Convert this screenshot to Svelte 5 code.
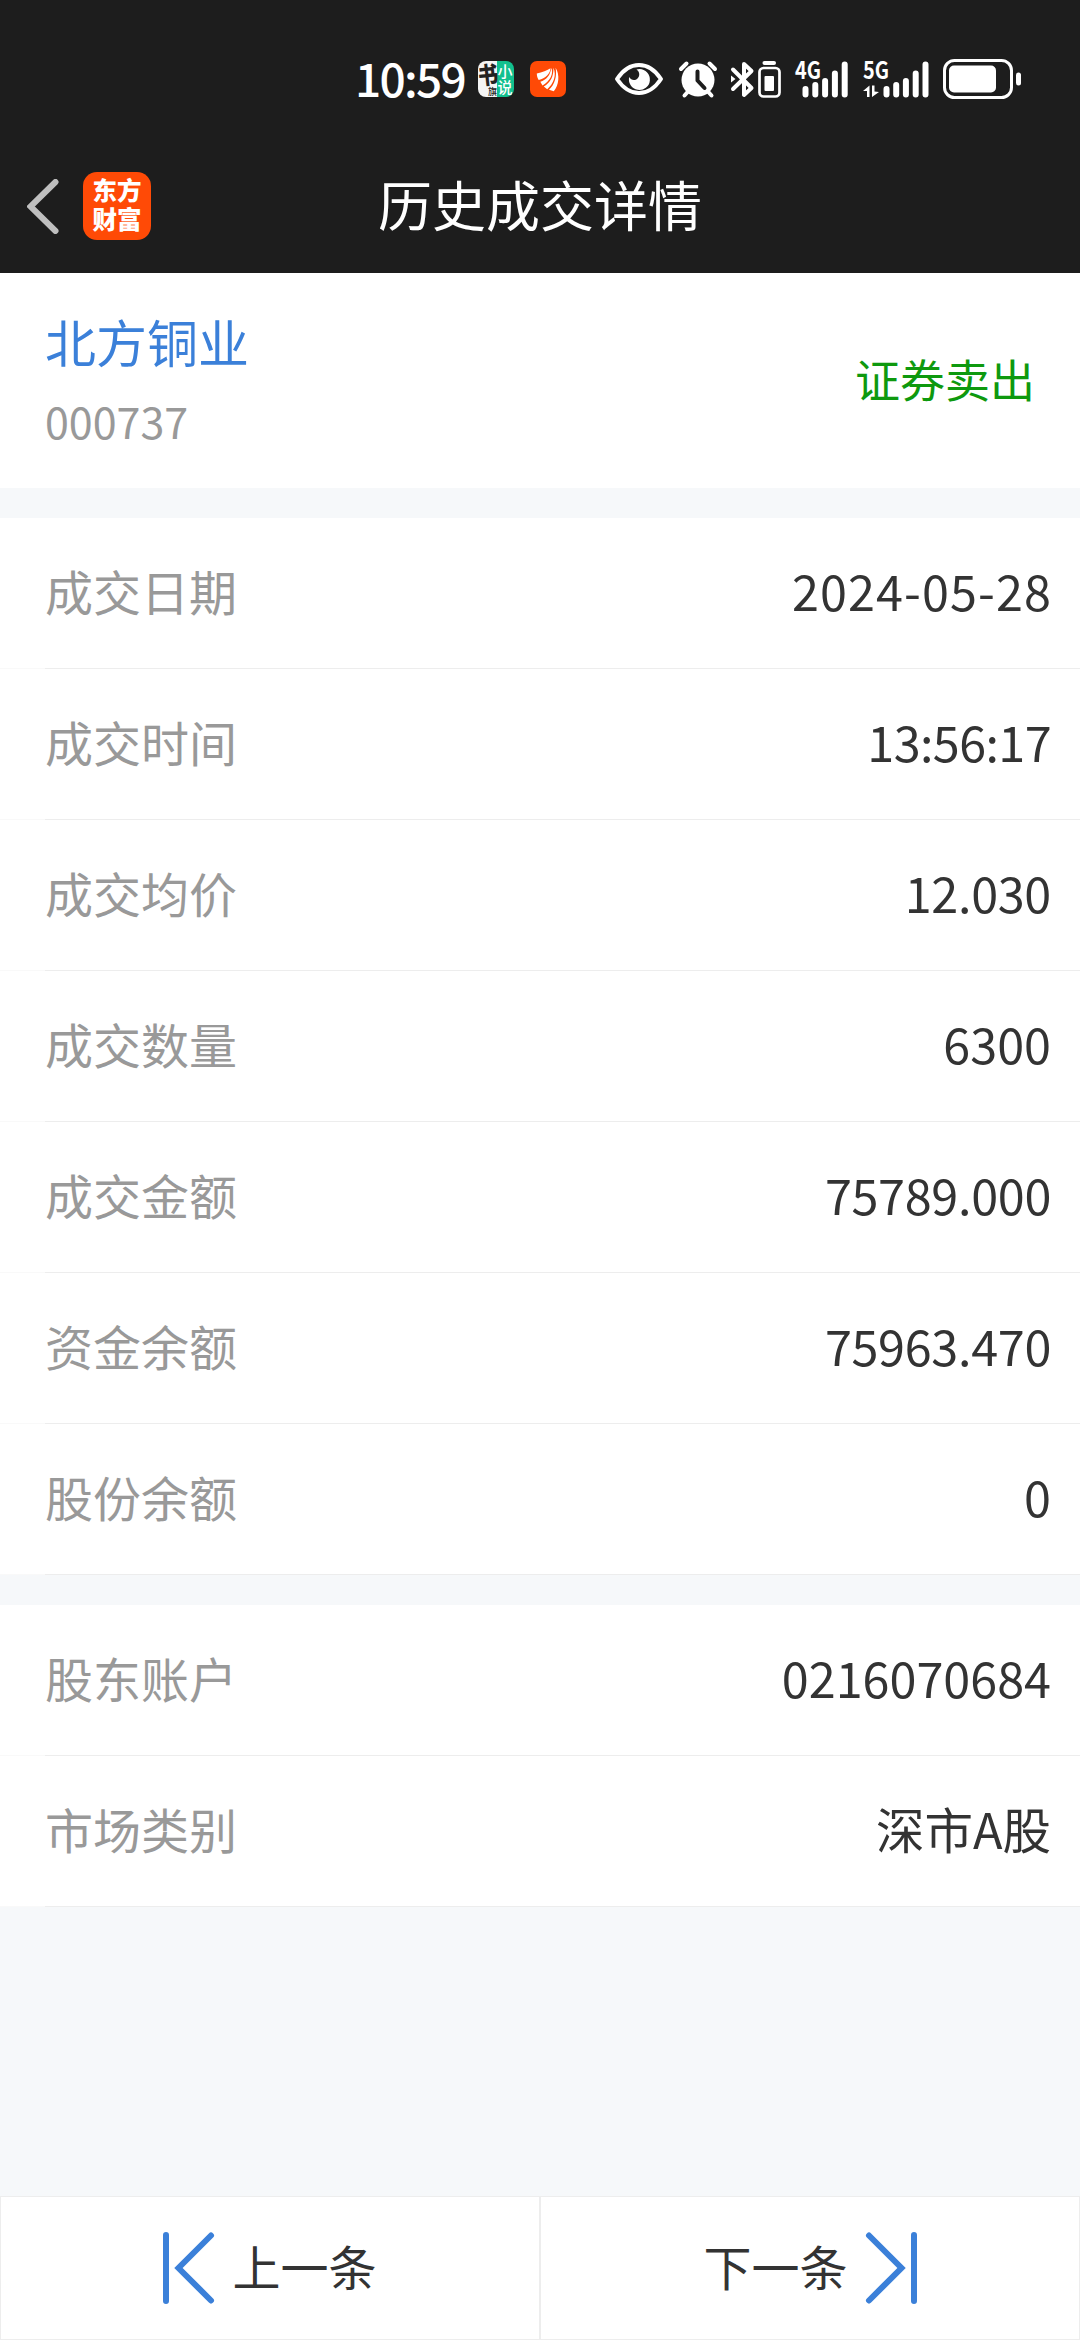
<script lang="ts">
  type Row = { label: string; value: string; kind?: 'date' | 'time' | 'decimal' };

  const stock = { name: '北方铜业', code: '000737', action: '证券卖出' };

  const groups: Row[][] = [
    [
      { label: '成交日期', value: '2024-05-28', kind: 'date' },
      { label: '成交时间', value: '13:56:17', kind: 'time' },
      { label: '成交均价', value: '12.030', kind: 'decimal' },
      { label: '成交数量', value: '6300' },
      { label: '成交金额', value: '75789.000', kind: 'decimal' },
      { label: '资金余额', value: '75963.470', kind: 'decimal' },
      { label: '股份余额', value: '0' }
    ],
    [
      { label: '股东账户', value: '0216070684' },
      { label: '市场类别', value: '深市A股' }
    ]
  ];
</script>

<div class="screen">
  <div class="status-bar">
    <span class="time">10:59</span>
    <svg class="app-novel" width="36" height="36" viewBox="0 0 36 36">
      <defs>
        <clipPath id="novel-clip"><rect width="36" height="36" rx="8" /></clipPath>
      </defs>
      <g clip-path="url(#novel-clip)">
        <rect width="19" height="36" fill="#f4f4f4" />
        <rect x="19" width="17" height="36" fill="#12c08e" />
        <text class="brush" x="0" y="23" font-size="24" textLength="20" lengthAdjust="spacingAndGlyphs" transform="rotate(-6 10 14)">书</text>
        <text class="brush small" x="10" y="34" font-size="9">旗</text>
        <text class="tile" x="19.500" y="16" font-size="15">小</text>
        <text class="tile" x="19.500" y="32" font-size="15">说</text>
      </g>
    </svg>
    <svg class="app-em" width="36" height="36" viewBox="0 0 36 36">
      <rect width="36" height="36" rx="7" fill="#ff4a06" />
      <path d="M6.800 12.500C12 11 17.500 9.500 20.500 7.200C20.500 12 15.500 17.500 8.700 19C7.500 17 6.800 15 6.800 12.500Z" fill="#fff" />
      <path d="M21.200 7C24 12 20 20.500 12.500 24.500L10.300 20.700C16.500 19 20.500 14 21.200 7Z" fill="#fff" />
      <path d="M23.300 6.800C27 14 23.500 23 17.200 28.200L13.800 25.600C20.500 21.500 24 15 23.300 6.800Z" fill="#fff" />
      <path d="M25.600 6.800C30 14 29 24 23.800 30.300L19 28.800C25 23.500 27 15 25.600 6.800Z" fill="#fff" />
    </svg>
    <svg class="eye" width="48" height="32" viewBox="0 0 48 32">
      <path d="M2 16C8 7 15.500 2 24 2S40 7 46 16C40 25 32.500 30 24 30S8 25 2 16Z" fill="none" stroke="#fff" stroke-width="4" stroke-linejoin="round" />
      <path d="M24.500 6A10.500 10.500 0 1 1 14.200 14C16 17.500 20 18 22.500 15.500C25 13 25 9 21.500 6.500C22.500 6.200 23.500 6 24.500 6Z" fill="#fff" />
    </svg>
    <svg class="alarm" width="38" height="37" viewBox="0 0 38 37">
      <path d="M2 8L7.500 2.500M36 8L30.500 2.500M9.500 30L5.500 34.500M28.500 30L32.500 34.500" fill="none" stroke="#fff" stroke-width="4" stroke-linecap="round" />
      <circle cx="19" cy="19" r="16.500" fill="#fff" />
      <path d="M18.500 10.500V19.500L25.500 27" fill="none" stroke="#1d1d1d" stroke-width="4" stroke-linecap="round" stroke-linejoin="round" />
    </svg>
    <svg class="bluetooth" width="23" height="37" viewBox="0 0 23 37">
      <path d="M2 8.500L20.500 27L13 34V3L20.500 10L2 28" fill="none" stroke="#fff" stroke-width="4" stroke-linecap="round" stroke-linejoin="round" />
      <path d="M0 14.500L4.500 18L0 21.500Z" fill="#fff" />
    </svg>
    <svg class="device-battery" width="23" height="37" viewBox="0 0 23 37">
      <rect x="4.500" y="0" width="13.500" height="4" rx="2" fill="#fff" />
      <rect x="1.500" y="7" width="20" height="28.500" rx="4" fill="none" stroke="#fff" stroke-width="2.700" />
      <rect x="6.500" y="15" width="9.500" height="15" rx="1" fill="#fff" />
    </svg>
    <svg class="signal-4g" width="54" height="37" viewBox="0 0 54 37">
      <text class="net" x="0" y="18" textLength="26" lengthAdjust="spacingAndGlyphs">4G</text>
      <path d="M10.500 28V33.500M20.300 24V33.500M30.100 20V33.500M39.900 12.500V33.500M49.700 3.500V33.500" fill="none" stroke="#fff" stroke-width="6" stroke-linecap="round" />
    </svg>
    <svg class="signal-5g" width="67" height="37" viewBox="0 0 67 37">
      <text class="net" x="0" y="18" textLength="26" lengthAdjust="spacingAndGlyphs">5G</text>
      <path d="M0 30L6.500 24.500V36H4V30ZM9 24.500H11.500V30.500L16 31L9 36Z" fill="#fff" />
      <path d="M23.500 28V33.500M33.200 24V33.500M42.900 20V33.500M52.700 12.500V33.500M62.500 3.500V33.500" fill="none" stroke="#fff" stroke-width="6" stroke-linecap="round" />
    </svg>
    <svg class="battery" width="79" height="40" viewBox="0 0 79 40">
      <rect x="1.500" y="1.500" width="67" height="37" rx="10" fill="none" stroke="#fff" stroke-width="3" />
      <rect x="6" y="6.500" width="47" height="27" rx="5" fill="#fff" />
      <rect x="73" y="13.500" width="5" height="13" rx="2.500" fill="#fff" />
    </svg>
  </div>

  <header class="nav">
    <button class="back" aria-label="返回">
      <svg width="32" height="55" viewBox="0 0 32 55">
        <path d="M28.500 3L3.500 27.500L28.500 52" fill="none" stroke="#bfbfbf" stroke-width="6" stroke-linecap="round" />
      </svg>
    </button>
    <div class="logo"><span>东方</span><span>财富</span></div>
    <h1>历史成交详情</h1>
  </header>

  <section class="summary">
    <div>
      <div class="name">{stock.name}</div>
      <div class="code">{stock.code}</div>
    </div>
    <div class="action">{stock.action}</div>
  </section>

  {#each groups as rows}
    <section class="group">
      {#each rows as row}
        <div class="row">
          <span class="label">{row.label}</span>
          <span class="value {row.kind ?? ''}">{row.value}</span>
        </div>
      {/each}
    </section>
  {/each}

  <footer class="pager">
    <button>
      <svg width="52" height="72" viewBox="0 0 52 72">
        <path d="M3 3V69M48 3.500L15.500 36L48 68.500" fill="none" stroke="#3b80d9" stroke-width="6" stroke-linecap="round" />
      </svg>
      <span>上一条</span>
    </button>
    <button>
      <span>下一条</span>
      <svg width="52" height="72" viewBox="0 0 52 72">
        <path d="M49 3V69M4 3.500L36.500 36L4 68.500" fill="none" stroke="#3b80d9" stroke-width="6" stroke-linecap="round" />
      </svg>
    </button>
  </footer>
</div>

<style>
  :global(body) {
    background: #f6f8fa;
  }

  .screen {
    display: flex;
    flex-direction: column;
    width: 1080px;
    height: 2340px;
    overflow: hidden;
    background: #f6f8fa;
    color: #333;
    font-family: "Noto Sans CJK SC", "Noto Sans", sans-serif;
  }

  .status-bar {
    display: flex;
    align-items: center;
    height: 40px;
    padding: 59px 58px 40px 355px;
    background: #1d1d1d;
    color: #fff;
  }

  .status-bar svg {
    flex-shrink: 0;
    overflow: visible;
  }

  .status-bar .time {
    width: 123px;
    padding-bottom: 4px;
    font-size: 46px;
    font-weight: 500;
    line-height: 40px;
    letter-spacing: -1.7px;
    white-space: nowrap;
  }

  .app-em {
    margin-left: 16px;
  }

  .eye {
    margin-left: 49px;
  }

  .alarm {
    margin-left: 16px;
  }

  .bluetooth {
    margin-left: 14px;
  }

  .device-battery {
    margin-left: 4px;
  }

  .signal-4g {
    margin-left: 14px;
  }

  .signal-5g {
    margin-left: 14px;
  }

  .battery {
    margin-left: 13px;
  }

  .net {
    fill: #fff;
    font-size: 24px;
    font-weight: 700;
  }

  .brush {
    fill: #222;
    font-weight: 900;
  }

  .brush.small {
    font-weight: 500;
  }

  .tile {
    fill: #fff;
    font-weight: 500;
  }

  .nav {
    display: grid;
    grid-template-columns: 83px 68px 1fr 151px;
    align-items: center;
    height: 134px;
    background: #1d1d1d;
    color: #fff;
  }

  .back {
    display: flex;
    padding: 0 0 0 27px;
    border: none;
    background: none;
  }

  .logo {
    display: flex;
    flex-direction: column;
    align-items: center;
    justify-content: center;
    box-sizing: border-box;
    height: 68px;
    padding-bottom: 4px;
    border-radius: 14px;
    background: #ff4a06;
    font-size: 24.5px;
    font-weight: 900;
    line-height: 29px;
  }

  h1 {
    margin: 0;
    padding-bottom: 4px;
    font-size: 54px;
    font-weight: 400;
    line-height: 80px;
    text-align: center;
  }

  .summary {
    display: flex;
    align-items: center;
    justify-content: space-between;
    height: 215px;
    padding: 0 45px;
    background: #fff;
  }

  .name {
    color: #3b80d9;
    font-size: 51px;
    line-height: 82px;
  }

  .code {
    padding-bottom: 2px;
    color: #999;
    font-size: 43px;
    line-height: 77px;
  }

  .action {
    padding-bottom: 4px;
    color: #0e990e;
    font-size: 45px;
    line-height: 60px;
  }

  .group {
    margin-top: 30px;
  }

  /* The divider is fainter under the left inset */
  .row {
    display: flex;
    align-items: center;
    justify-content: space-between;
    box-sizing: border-box;
    height: 151px;
    padding: 0 29px 7px 45px;
    background: linear-gradient(to right, #f9f9f9 45px, #ededed 45px) left bottom / 100% 1px no-repeat #fff;
  }

  .label {
    color: #999;
    font-size: 48px;
    line-height: 70px;
  }

  .value {
    font-size: 48.5px;
    line-height: 70px;
  }

  .value.date {
    margin-right: -1px;
    letter-spacing: 1.1px;
  }

  .value.time {
    letter-spacing: -0.6px;
  }

  .value.decimal {
    letter-spacing: -0.3px;
  }

  .pager {
    display: flex;
    height: 144px;
    margin-top: auto;
  }

  .pager button {
    display: flex;
    flex: 1;
    align-items: center;
    justify-content: center;
    gap: 17px;
    padding: 0;
    border: 1px solid #ededed;
    background: #fff;
    color: #333;
    font-family: inherit;
    font-size: 48px;
    line-height: 70px;
  }

  .pager span {
    padding-bottom: 6px;
  }
</style>
